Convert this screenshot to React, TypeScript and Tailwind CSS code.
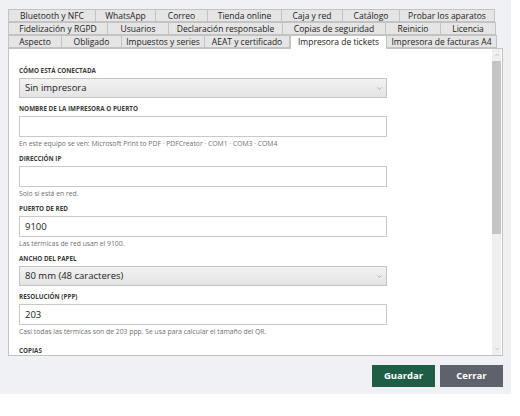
import { ChevronDown, ChevronUp } from "lucide-react";

type Tab = { label: string; w: string; active?: boolean };

// three wrapped rows of the settings tab bar, widths stretched to fill the row
const tabRows: Tab[][] = [
  [
    { label: "Bluetooth y NFC", w: "w-[88px]" },
    { label: "WhatsApp", w: "w-[61px]" },
    { label: "Correo", w: "w-[53px]" },
    { label: "Tienda online", w: "w-[75px]" },
    { label: "Caja y red", w: "w-[62px]" },
    { label: "Catálogo", w: "w-[58px]" },
    { label: "Probar los aparatos", w: "w-[96px]" },
  ],
  [
    { label: "Fidelización y RGPD", w: "w-[100px]" },
    { label: "Usuarios", w: "w-[62px]" },
    { label: "Declaración responsable", w: "w-[115px]" },
    { label: "Copias de seguridad", w: "w-[104px]" },
    { label: "Reinicio", w: "w-[56px]" },
    { label: "Licencia", w: "w-[56px]" },
  ],
  [
    { label: "Aspecto", w: "w-[54px]" },
    { label: "Obligado", w: "w-[61px]" },
    { label: "Impuestos y series", w: "w-[84px]" },
    { label: "AEAT y certificado", w: "w-[86px]" },
    { label: "Impresora de tickets", w: "w-[97px]", active: true },
    { label: "Impresora de facturas A4", w: "w-[111px]" },
  ],
];

function Label({ children }: { children: React.ReactNode }) {
  return (
    <div className="h-[10px] mb-[2px] text-[6.3px] leading-[10px] font-bold uppercase text-[#3b3b3b]">
      {children}
    </div>
  );
}

function Help({ children }: { children: React.ReactNode }) {
  return <div className="mt-[1px] h-[11px] text-[6.8px] leading-[11px] text-[#707070]">{children}</div>;
}

function TextField({ value }: { value?: string }) {
  return (
    <div className="w-[368px] h-[21px] border border-[#c9c9c9] bg-white px-[5px] text-[9.5px] leading-[19px] text-[#222]">
      {value}
    </div>
  );
}

function SelectField({ value }: { value: string }) {
  return (
    <div className="w-[368px] h-[20px] border border-[#c4c4c4] bg-gradient-to-b from-[#f2f2f2] to-[#e4e4e4] pl-[5px] pr-[3px] flex items-center justify-between text-[9.5px] text-[#222]">
      <span>{value}</span>
      <ChevronDown className="w-[7px] h-[7px] text-[#8a8a8a]" strokeWidth={2} />
    </div>
  );
}

export default function App() {
  return (
    <div className="w-[520px] h-[416px] bg-white font-['Open_Sans',sans-serif]">
      <div className="w-[511px] h-[394px] bg-[#eff1f4] pt-[9px] pl-[8px]">
        <div className="flex flex-col">
          {tabRows.map((row, i) => (
            <div key={i} className="flex h-[13px]">
              {row.map((t) => (
                <div
                  key={t.label}
                  className={
                    t.active
                      ? `${t.w} h-[14px] relative z-10 bg-white border border-b-0 border-[#c3c3c3] text-center text-[8.5px] leading-[12px] text-[#222]`
                      : `${t.w} h-[13px] bg-[#e5e5e5] border border-[#c3c3c3] -ml-px first:ml-0 text-center text-[8.5px] leading-[11px] text-[#222]`
                  }
                >
                  {t.label}
                </div>
              ))}
            </div>
          ))}
        </div>

        <div className="w-[495px] h-[308px] border border-[#c3c3c3] bg-white flex">
          <div className="flex-1 overflow-hidden pl-[10px] pt-[17px]">
            <Label>Cómo está conectada</Label>
            <SelectField value="Sin impresora" />

            <div className="mt-[6px]">
              <Label>Nombre de la impresora o puerto</Label>
              <TextField />
              <Help>En este equipo se ven: Microsoft Print to PDF · PDFCreator · COM1 · COM3 · COM4</Help>
            </div>

            <div className="mt-[5px]">
              <Label>Dirección IP</Label>
              <TextField />
              <Help>Solo si está en red.</Help>
            </div>

            <div className="mt-[5px]">
              <Label>Puerto de red</Label>
              <TextField value="9100" />
              <Help>Las térmicas de red usan el 9100.</Help>
            </div>

            <div className="mt-[5px]">
              <Label>Ancho del papel</Label>
              <SelectField value="80 mm (48 caracteres)" />
            </div>

            <div className="mt-[6px]">
              <Label>Resolución (PPP)</Label>
              <TextField value="203" />
              <Help>Casi todas las térmicas son de 203 ppp. Se usa para calcular el tamaño del QR.</Help>
            </div>

            <div className="mt-[9px]">
              <Label>Copias</Label>
              <TextField />
            </div>
          </div>

          {/* vertical scrollbar */}
          <div className="w-[9px] bg-[#efefef] flex flex-col items-center mr-px">
            <div className="h-[12px] flex items-center justify-center">
              <ChevronUp className="w-[6px] h-[6px] text-[#9a9a9a]" strokeWidth={2} />
            </div>
            <div className="w-[9px] h-[173px] bg-[#c4c4c4]" />
            <div className="flex-1" />
            <div className="h-[12px] flex items-center justify-center">
              <ChevronDown className="w-[6px] h-[6px] text-[#9a9a9a]" strokeWidth={2} />
            </div>
          </div>
        </div>

        <div className="w-[495px] flex justify-end gap-[5px] mt-[9px]">
          <button className="w-[63px] h-[22px] bg-[#1f5d47] text-white text-[9.5px] font-bold">Guardar</button>
          <button className="w-[63px] h-[22px] bg-[#5e626c] text-white text-[9.5px] font-bold">Cerrar</button>
        </div>
      </div>
    </div>
  );
}
